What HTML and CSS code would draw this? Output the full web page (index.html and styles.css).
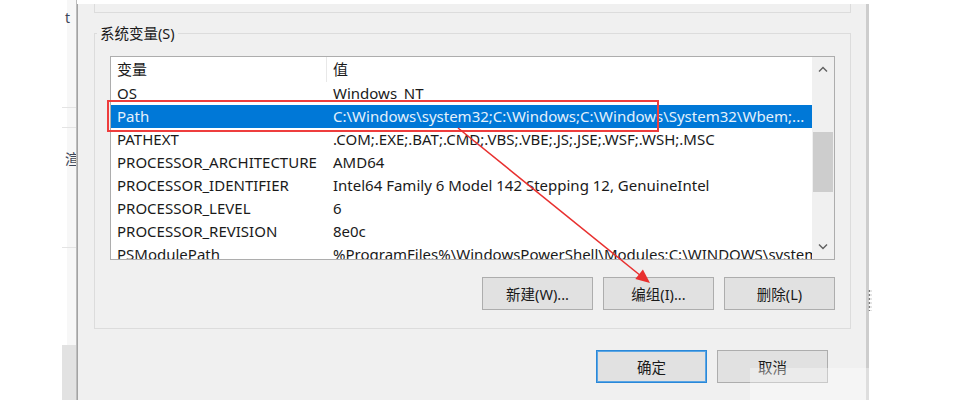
FILE: index.html
```html
<!DOCTYPE html>
<html lang="zh-CN">

<head>
    <meta charset="UTF-8">
    <meta name="viewport" content="width=device-width, initial-scale=1.0">
    <title>环境变量</title>
    <link rel="stylesheet" href="styles.css">
</head>

<body>
    <div class="backwin">
        <div class="bw-row bw-first"><span class="bw-text">t</span></div>
        <div class="bw-row bw-second"></div>
        <div class="bw-row bw-third"><span class="bw-text">渲</span></div>
        <div class="bw-fill"></div>
        <div class="bw-bottom"></div>
    </div>

    <div class="dialog">
        <div class="user-group"></div>

        <fieldset class="sys-group">
            <legend>系统变量(S)</legend>
            <div class="list">
                <div class="rows">
                    <div class="row head"><span class="name">变量</span><span class="value">值</span></div>
                    <div class="row"><span class="name">OS</span><span class="value">Windows_NT</span></div>
                    <div class="row selected"><span class="name">Path</span><span class="value">C:\Windows\system32;C:\Windows;C:\Windows\System32\Wbem;...</span></div>
                    <div class="row"><span class="name">PATHEXT</span><span class="value">.COM;.EXE;.BAT;.CMD;.VBS;.VBE;.JS;.JSE;.WSF;.WSH;.MSC</span></div>
                    <div class="row"><span class="name">PROCESSOR_ARCHITECTURE</span><span class="value">AMD64</span></div>
                    <div class="row"><span class="name">PROCESSOR_IDENTIFIER</span><span class="value">Intel64 Family 6 Model 142 Stepping 12, GenuineIntel</span></div>
                    <div class="row"><span class="name">PROCESSOR_LEVEL</span><span class="value">6</span></div>
                    <div class="row"><span class="name">PROCESSOR_REVISION</span><span class="value">8e0c</span></div>
                    <div class="row"><span class="name">PSModulePath</span><span class="value">%ProgramFiles%\WindowsPowerShell\Modules;C:\WINDOWS\system32\WindowsPowerShell\v1.0\Modules</span></div>
                </div>
                <div class="scrollbar">
                    <div class="scroll-btn">
                        <svg width="10" height="7" viewBox="0 0 10 7"><polyline points="1,5.5 5,1.5 9,5.5" /></svg>
                    </div>
                    <div class="track">
                        <div class="thumb"></div>
                    </div>
                    <div class="scroll-btn">
                        <svg width="10" height="7" viewBox="0 0 10 7"><polyline points="1,1.5 5,5.5 9,1.5" /></svg>
                    </div>
                </div>
            </div>
            <div class="actions">
                <button type="button">新建(W)...</button>
                <button type="button">编组(I)...</button>
                <button type="button">删除(L)</button>
            </div>
        </fieldset>

        <div class="footer">
            <button type="button" class="default">确定</button>
            <button type="button">取消</button>
        </div>
    </div>

    <!-- 标注: 红框 + 箭头 -->
    <div class="callout"></div>
    <svg class="arrow" width="959" height="400" viewBox="0 0 959 400">
        <line x1="458" y1="128" x2="641" y2="276" />
        <polygon points="650,283 635.3,278.9 642.9,269.5" />
    </svg>
    <div class="grip"></div>
    <div class="fade"></div>
</body>

</html>
```

FILE: styles.css
```css
* {
    box-sizing: border-box;
}

body {
    margin: 0;
    width: 959px;
    height: 400px;
    overflow: hidden;
    padding-left: 62px;
    background-color: #fff;
    display: flex;
    position: relative;
    font-family: "Noto Sans", "Noto Sans CJK SC", sans-serif;
    font-size: 14px;
    color: #1a1a1a;
}

/* 后面那个窗口露出来的一条 */
.backwin {
    width: 15px;
    display: flex;
    flex-direction: column;
    border-right: 1px solid #bdbdbd;
    background: linear-gradient(to right, #fff 0, #fff 5px, #f7f7f7 5px);
    overflow: hidden;
}

.bw-row {
    border-bottom: 1px solid #e4e4e4;
}

.bw-first {
    height: 108px;
    padding-top: 9px;
}

.bw-second {
    height: 20px;
}

.bw-third {
    height: 120px;
    padding-top: 22px;
}

.bw-text {
    display: block;
    margin-left: 3px;
    color: #3d4658;
    line-height: 18px;
}

.bw-fill {
    flex: 1;
}

.bw-bottom {
    height: 55px;
    background-color: #e2e2e2;
}

.dialog {
    width: 792px;
    margin-top: 4px;
    background-color: #f0f0f0;
    border-left: 1px solid #a3a3a3;
    border-right: 3px solid #cdcdcd;
    display: flex;
    flex-direction: column;
}

.user-group {
    height: 9px;
    margin: 0 15px 0 16px;
    border: 1px solid #dcdcdc;
    border-top: none;
}

.sys-group {
    margin: 10px 15px 0 16px;
    padding: 0 15px 18px 15px;
    border: 1px solid #dcdcdc;
    min-width: 0;
}

.sys-group legend {
    margin-left: -13px;
    padding: 0 3px;
    line-height: 20px;
    font-size: 14.5px;
}

.list {
    margin-top: 13px;
    height: 204px;
    border: 1px solid #adadad;
    background-color: #fff;
    display: flex;
    overflow: hidden;
    font-size: 15px;
}

.rows {
    flex: 1;
    min-width: 0;
    overflow: hidden;
}

.row {
    display: flex;
    height: 23px;
    line-height: 23px;
    white-space: nowrap;
}

.row.head {
    height: 25px;
    line-height: 25px;
}

.name {
    width: 216px;
    flex-shrink: 0;
    padding-left: 6px;
}

.head .name {
    border-right: 1px solid #e8e8e8;
}

.value {
    flex: 1;
    min-width: 0;
    padding-left: 6px;
    overflow: hidden;
}

.row.selected {
    background-color: #0078d7;
    color: #e4f1fc;
}

.scrollbar {
    width: 22px;
    flex-shrink: 0;
    background-color: #f0f0f0;
    display: flex;
    flex-direction: column;
}

.scroll-btn {
    height: 25px;
    display: flex;
    justify-content: center;
    align-items: center;
}

.scroll-btn polyline {
    fill: none;
    stroke: #606060;
    stroke-width: 1.4;
}

.track {
    flex: 1;
}

.thumb {
    margin: 50px 1px 0;
    height: 60px;
    background-color: #cdcdcd;
}

.actions {
    display: flex;
    justify-content: flex-end;
    gap: 10px;
    margin-top: 17px;
}

button {
    width: 111px;
    height: 33px;
    padding: 0;
    background-color: #e1e1e1;
    border: 1px solid #adadad;
    font-family: inherit;
    font-size: 14.5px;
    color: #1a1a1a;
}

.footer {
    display: flex;
    justify-content: flex-end;
    gap: 10px;
    margin-top: 21px;
    padding-right: 38px;
}

button.default {
    border-color: #2a88d8;
    box-shadow: inset 0 0 0 1px #5aa5e4;
}

.callout {
    position: absolute;
    left: 107px;
    top: 100px;
    width: 552px;
    height: 32px;
    border: 2px solid #ee3d3d;
}

.arrow {
    position: absolute;
    left: 0;
    top: 0;
    pointer-events: none;
}

.arrow line {
    stroke: #e8302f;
    stroke-width: 1.5;
}

.arrow polygon {
    fill: #e8302f;
}

/* 右边框外的一点拖拽痕迹 */
.grip {
    position: absolute;
    left: 868px;
    top: 289px;
    width: 4px;
    height: 22px;
    background: radial-gradient(circle, #7a7a7a 0.8px, transparent 1.2px) 0 0 / 3px 4px;
}

.fade {
    position: absolute;
    left: 750px;
    top: 368px;
    width: 197px;
    height: 32px;
    background-color: rgba(255, 255, 255, 0.35);
}
```
